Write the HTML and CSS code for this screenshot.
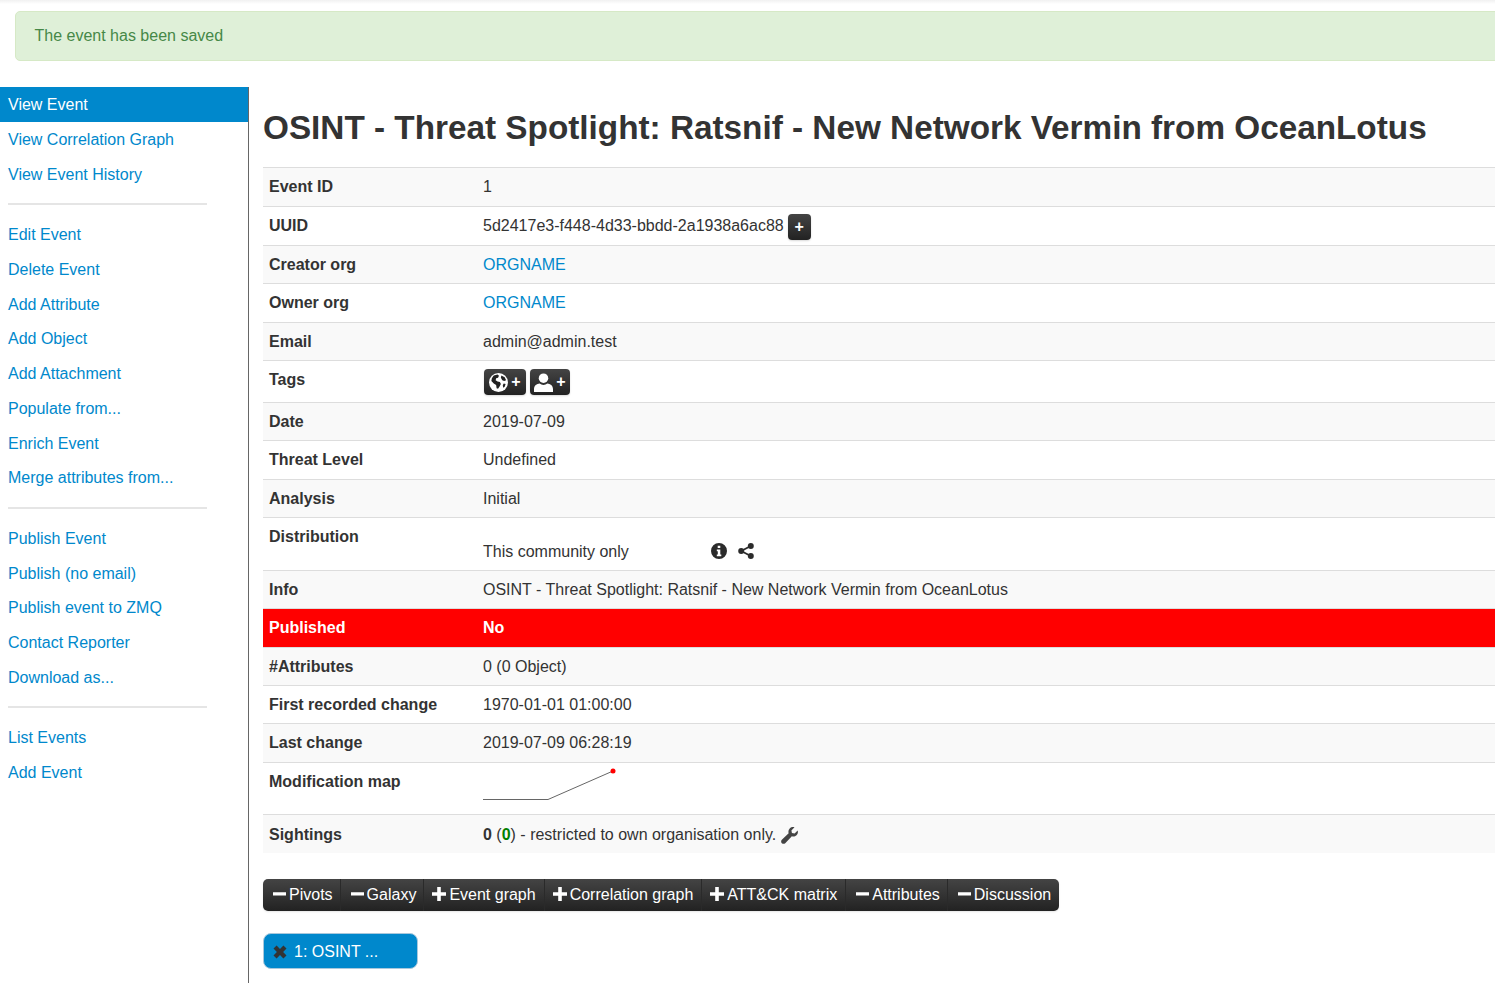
FILE: index.html
```html
<!DOCTYPE html>
<html lang="en">
<head>
<meta charset="utf-8">
<title>Event</title>
<link rel="stylesheet" href="styles.css">
</head>
<body>
<div class="topshadow"></div>
<div class="alert">The event has been saved</div>
<div class="layout">
  <nav class="sidebar">
    <a class="active" href="#">View Event</a>
    <a href="#">View Correlation Graph</a>
    <a href="#">View Event History</a>
    <hr>
    <a href="#">Edit Event</a>
    <a href="#">Delete Event</a>
    <a href="#">Add Attribute</a>
    <a href="#">Add Object</a>
    <a href="#">Add Attachment</a>
    <a href="#">Populate from...</a>
    <a href="#">Enrich Event</a>
    <a href="#">Merge attributes from...</a>
    <hr>
    <a href="#">Publish Event</a>
    <a href="#">Publish (no email)</a>
    <a href="#">Publish event to ZMQ</a>
    <a href="#">Contact Reporter</a>
    <a href="#">Download as...</a>
    <hr>
    <a href="#">List Events</a>
    <a href="#">Add Event</a>
  </nav>
  <main class="content">
    <h2 class="title">OSINT - Threat Spotlight: Ratsnif - New Network Vermin from OceanLotus</h2>
    <div class="meta">
      <div class="row"><div class="key">Event ID</div><div class="val">1</div></div>
      <div class="row"><div class="key">UUID</div><div class="val">5d2417e3-f448-4d33-bbdd-2a1938a6ac88<span class="tagbtn uuidbtn">+</span></div></div>
      <div class="row"><div class="key">Creator org</div><div class="val"><a href="#">ORGNAME</a></div></div>
      <div class="row"><div class="key">Owner org</div><div class="val"><a href="#">ORGNAME</a></div></div>
      <div class="row"><div class="key">Email</div><div class="val">admin@admin.test</div></div>
      <div class="row row-tags"><div class="key">Tags</div><div class="val">
        <span class="tagbtn wide"><svg class="ico-tag" viewBox="0 0 20 20"><circle cx="10" cy="10" r="10" fill="#fff"/><path fill="#222" d="M5 2.500l4-1 1.500 1.500-1 2-2 .5-.5 2 2 1.500 2.500.5 1 2-1.500 3-1.500 2-1.500-.5-.5-3.500-2.500-1.500-2.500-2.500.5-3zM13 2.500l3.500 2 1.500 3-2 1-2-1-1.500-2.500zM15.500 11l2 .5-1 3-1.500 1-.5-2.500z"/></svg><span>+</span></span>
        <span class="tagbtn wide user"><svg class="ico-tag" viewBox="0 0 20 20"><circle cx="10" cy="5.500" r="5" fill="#fff"/><path fill="#fff" d="M0 20v-3c0-4 3-5.500 6-6 1 1 2.500 1.500 4 1.500s3-.5 4-1.500c3 .5 6 2 6 6v3z"/></svg><span>+</span></span>
      </div></div>
      <div class="row"><div class="key">Date</div><div class="val">2019-07-09</div></div>
      <div class="row"><div class="key">Threat Level</div><div class="val">Undefined</div></div>
      <div class="row"><div class="key">Analysis</div><div class="val">Initial</div></div>
      <div class="row row-dist"><div class="key">Distribution</div><div class="val dist">
        <span class="dist-name">This community only</span>
        <svg class="ico-info" viewBox="0 0 16 16"><path fill="#2b2b2b" fill-rule="evenodd" d="M8 0a8 8 0 1 0 0 16A8 8 0 0 0 8 0zM6.700 2.700h2.600v2.400H6.700zM5.800 6.500h3.500v5h1v1.800H5.800v-1.800h1v-3.200h-1z"/></svg>
        <svg class="ico-share" viewBox="0 0 16 16"><path fill="none" stroke="#2b2b2b" stroke-width="1.800" d="M12.800 3L3.200 8l9.600 5"/><circle cx="12.800" cy="3" r="3" fill="#2b2b2b"/><circle cx="3.200" cy="8" r="3" fill="#2b2b2b"/><circle cx="12.800" cy="13" r="3" fill="#2b2b2b"/></svg>
      </div></div>
      <div class="row"><div class="key">Info</div><div class="val">OSINT - Threat Spotlight: Ratsnif - New Network Vermin from OceanLotus</div></div>
      <div class="row row-red"><div class="key">Published</div><div class="val"><b>No</b></div></div>
      <div class="row"><div class="key">#Attributes</div><div class="val">0 (0 Object)</div></div>
      <div class="row"><div class="key">First recorded change</div><div class="val">1970-01-01 01:00:00</div></div>
      <div class="row"><div class="key">Last change</div><div class="val">2019-07-09 06:28:19</div></div>
      <div class="row row-map"><div class="key">Modification map</div><div class="val">
        <svg class="spark" viewBox="0 0 136 36"><path fill="none" stroke="#666" stroke-width="1" d="M0 31.500h65L130 3"/><circle cx="130" cy="3" r="2.500" fill="#f00"/></svg>
      </div></div>
      <div class="row row-last"><div class="key">Sightings</div><div class="val"><b>0</b> (<b class="green">0</b>) - restricted to own organisation only.<svg class="ico-wrench" viewBox="0 0 16 16"><path fill="#444" d="M15.700 3.300c.5 1.600.1 3.300-1.100 4.500-1.200 1.200-2.900 1.500-4.400 1L4 15.200c-.9.900-2.300.9-3.200 0s-.9-2.300 0-3.200l6.400-6.200c-.5-1.500-.2-3.200 1-4.400C9.400.2 11.200-.2 12.700.3L9.800 3.200l.5 2.500 2.500.5z"/></svg></div></div>
    </div>
    <div class="toolbar">
      <span class="tbtn"><svg class="ti" viewBox="0 0 14 14"><path fill="#fff" d="M0 5h14v3.500H0z"/></svg>Pivots</span>
      <span class="tbtn"><svg class="ti" viewBox="0 0 14 14"><path fill="#fff" d="M0 5h14v3.500H0z"/></svg>Galaxy</span>
      <span class="tbtn tbtn-plus"><svg class="ti" viewBox="0 0 14 14"><path fill="#fff" d="M5.200 0h3.600v5.200H14v3.600H8.800V14H5.200V8.800H0V5.200h5.200z"/></svg>Event graph</span>
      <span class="tbtn tbtn-plus"><svg class="ti" viewBox="0 0 14 14"><path fill="#fff" d="M5.200 0h3.600v5.200H14v3.600H8.800V14H5.200V8.800H0V5.200h5.200z"/></svg>Correlation graph</span>
      <span class="tbtn tbtn-plus"><svg class="ti" viewBox="0 0 14 14"><path fill="#fff" d="M5.200 0h3.600v5.200H14v3.600H8.800V14H5.200V8.800H0V5.200h5.200z"/></svg>ATT&amp;CK matrix</span>
      <span class="tbtn"><svg class="ti" viewBox="0 0 14 14"><path fill="#fff" d="M0 5h14v3.500H0z"/></svg>Attributes</span>
      <span class="tbtn"><svg class="ti" viewBox="0 0 14 14"><path fill="#fff" d="M0 5h14v3.500H0z"/></svg>Discussion</span>
    </div>
    <div class="tab"><svg class="ico-x" viewBox="0 0 14 14"><path fill="#333" d="M3.600.5L7 3.900 10.400.5l3.100 3.100L10.100 7l3.400 3.400-3.100 3.100L7 10.100l-3.400 3.400L.5 10.400 3.900 7 .5 3.600z"/></svg>1: OSINT ...</div>
  </main>
</div>
</body>
</html>
```
FILE: styles.css
```css
* { box-sizing: border-box; }
html, body { margin: 0; height: 100%; overflow: hidden; }
body {
  display: flex;
  flex-direction: column;
  font-family: "Liberation Sans", Arial, sans-serif;
  font-size: 16px;
  color: #333;
  background: #fff;
}
a { color: #0088cc; text-decoration: none; }
.topshadow { height: 4px; flex: none; background: linear-gradient(#f1f1f1, #fff); }
.alert {
  flex: none;
  margin: 7px 0 26px 15px;
  height: 50px;
  width: 1500px;
  padding: 0 18.5px;
  line-height: 48px;
  color: #468847;
  background: #dff0d8;
  border: 1px solid #d6e9c6;
  border-radius: 5px;
}
.layout { flex: 1; display: flex; min-height: 0; }
.sidebar {
  flex: none;
  width: 249px;
  border-right: 1px solid #666;
  display: flex;
  flex-direction: column;
}
.sidebar a {
  display: block;
  flex: none;
  height: 34.7px;
  line-height: 34.7px;
  padding: 1px 0 0 8px;
}
.sidebar a.active { height: 35px; color: #fff; background: #0088cc; }
.sidebar hr {
  flex: none;
  width: 199px;
  height: 2px;
  margin: 12px 0 12px 8px;
  border: 0;
  background: #e5e5e5;
}
.content { flex: 1; min-width: 0; padding-left: 14px; }
.title {
  margin: 0;
  height: 80.4px;
  padding-top: 20px;
  font-size: 33.3px;
  line-height: 42px;
  font-weight: bold;
  white-space: nowrap;
}
.meta { width: 100%; }
.row { display: flex; height: 38.4px; border-top: 1px solid #ddd; line-height: 21px; }
.row:nth-child(-n+5) { height: 38.6px; }
.row:nth-child(odd) { background: #f9f9f9; }
.key { flex: none; width: 214px; padding: 8px 6px; font-weight: bold; }
.val { flex: 1; padding: 8px 6px; }
.row-tags { height: 41.6px; }
.row-tags .key { padding-top: 8px; }
.row-tags .val { padding: 8px 7px 0; font-size: 0; }
.row-dist { height: 52.6px; }
.row-dist .key { padding-top: 8px; }
.val.dist { padding-top: 23px; display: flex; align-items: flex-start; }
.dist-name { width: 228px; }
.row-map { height: 52px; }
.row-map .key { padding-top: 8px; }
.row-map .val { padding: 5px 6px 0; }
.row-last { height: 39.2px; }
.row-last .key, .row-last .val { padding-top: 9px; }
.row-red { background: #f00 !important; color: #fff; }
.green { color: green; }
.tagbtn {
  display: inline-flex;
  align-items: center;
  justify-content: center;
  vertical-align: middle;
  height: 26px;
  color: #fff;
  font-size: 16px;
  font-weight: bold;
  line-height: 26px;
  border-radius: 4px;
  background: linear-gradient(#444, #222);
  box-shadow: 0 1px 2px rgba(0,0,0,.15);
}
.uuidbtn { width: 23px; margin: -4px 0 -4px 4px; }
.wide { width: 42px; margin-right: 4px; gap: 3px; }
.user { width: 40px; margin-right: 0; }
.ico-tag { width: 19px; height: 19px; }
.ico-info { width: 16px; height: 16px; margin-top: 2px; flex: none; }
.ico-share { width: 16px; height: 16px; margin: 2px 0 0 11px; flex: none; }
.spark { width: 136px; height: 36px; display: block; }
.ico-wrench { width: 17px; height: 17px; margin-left: 5px; vertical-align: -4px; }
.toolbar {
  display: inline-flex;
  height: 32px;
  margin-top: 26px;
  border-radius: 5px;
  overflow: hidden;
  background: linear-gradient(#444, #222);
  box-shadow: 0 1px 2px rgba(0,0,0,.1);
}
.tbtn {
  display: flex;
  align-items: center;
  gap: 3px;
  padding: 1px 7px 0 10px;
  color: #fff;
  white-space: nowrap;
  border-left: 1px solid #2a2a2a;
}
.tbtn-plus { padding-left: 8px; padding-right: 8px; }
.tbtn:first-child { border-left: 0; }
.tbtn:last-child { padding-right: 8px; }
.ti { width: 13px; height: 14px; margin-top: -3px; flex: none; }
.tbtn-plus .ti { width: 14px; }
.tab {
  display: flex;
  align-items: center;
  gap: 7px;
  width: 155px;
  height: 36px;
  margin-top: 22px;
  padding: 3px 0 0 9px;
  color: #fff;
  background: #0088cc;
  border: 1px solid #a9c8dc;
  border-radius: 8px;
}
.ico-x { width: 14px; height: 14px; margin-top: 0; flex: none; }
```
